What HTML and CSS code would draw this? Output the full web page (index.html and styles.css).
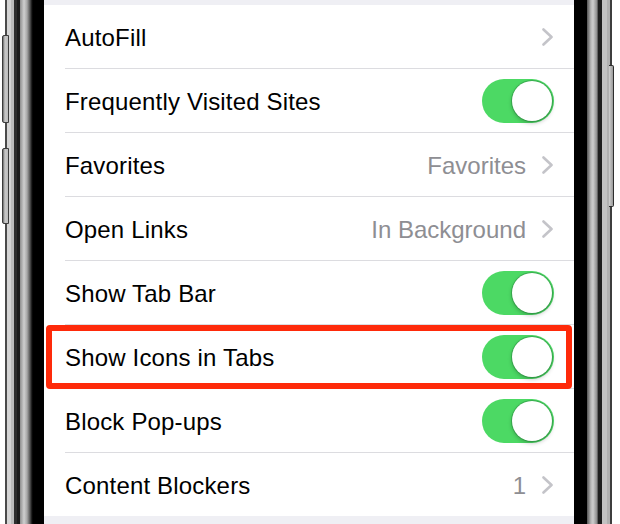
FILE: index.html
```html
<!DOCTYPE html>
<html lang="en">
<head>
<meta charset="utf-8">
<title>Safari Settings</title>
<link rel="stylesheet" href="styles.css">
</head>
<body>
<div class="phone">
  <div class="frame frame-left"></div>
  <div class="screen">
    <div class="group">
      <div class="row">
        <div class="row-inner">
          <span class="label">AutoFill</span>
          <span class="accessory">
            <svg class="chevron" viewBox="0 0 12 18" width="12" height="18"><polyline points="1.5,1.5 9.5,9 1.5,16.5"/></svg>
          </span>
        </div>
      </div>
      <div class="row">
        <div class="row-inner">
          <span class="label">Frequently Visited Sites</span>
          <span class="toggle"><span class="knob"></span></span>
        </div>
      </div>
      <div class="row">
        <div class="row-inner">
          <span class="label">Favorites</span>
          <span class="accessory">
            <span class="value">Favorites</span>
            <svg class="chevron" viewBox="0 0 12 18" width="12" height="18"><polyline points="1.5,1.5 9.5,9 1.5,16.5"/></svg>
          </span>
        </div>
      </div>
      <div class="row">
        <div class="row-inner">
          <span class="label">Open Links</span>
          <span class="accessory">
            <span class="value">In Background</span>
            <svg class="chevron" viewBox="0 0 12 18" width="12" height="18"><polyline points="1.5,1.5 9.5,9 1.5,16.5"/></svg>
          </span>
        </div>
      </div>
      <div class="row">
        <div class="row-inner">
          <span class="label">Show Tab Bar</span>
          <span class="toggle"><span class="knob"></span></span>
        </div>
      </div>
      <div class="row highlight">
        <div class="row-inner">
          <span class="label">Show Icons in Tabs</span>
          <span class="toggle"><span class="knob"></span></span>
        </div>
      </div>
      <div class="row">
        <div class="row-inner">
          <span class="label">Block Pop-ups</span>
          <span class="toggle"><span class="knob"></span></span>
        </div>
      </div>
      <div class="row last">
        <div class="row-inner">
          <span class="label">Content Blockers</span>
          <span class="accessory">
            <span class="value">1</span>
            <svg class="chevron" viewBox="0 0 12 18" width="12" height="18"><polyline points="1.5,1.5 9.5,9 1.5,16.5"/></svg>
          </span>
        </div>
      </div>
    </div>
  </div>
  <div class="frame frame-right"></div>
</div>
</body>
</html>
```

FILE: styles.css
```css
html, body {
  margin: 0;
  padding: 0;
  background: #ffffff;
}

.phone {
  display: flex;
  width: 620px;
  height: 524px;
  overflow: hidden;
  font-family: "Liberation Sans", Arial, sans-serif;
}

.frame {
  position: relative;
  height: 524px;
  flex: none;
}

.frame-left {
  width: 44px;
  background: linear-gradient(to right,
    #ffffff 0 5px,
    #4a4a4a 5px 7px,
    #d4d4d4 7px 11px,
    #bcbcbc 11px 14px,
    #2e2e2e 14px 17px,
    #1c1c1c 17px 20px,
    #8e8e8e 20px,
    #cfcfcf 24px,
    #a8a8a8 27px,
    #555555 30px,
    #111111 32px,
    #000000 33px 44px);
}

.frame-left::before,
.frame-left::after {
  content: "";
  position: absolute;
  left: 2px;
  width: 5px;
  background: linear-gradient(to right, #6a6a6a, #c8c8c8 40%, #bdbdbd);
  border: 1px solid #3c3c3c;
  border-radius: 2px 0 0 2px;
}

.frame-left::before {
  top: 35px;
  height: 86px;
}

.frame-left::after {
  top: 148px;
  height: 74px;
}

.frame-right {
  width: 46px;
  background: linear-gradient(to right,
    #000000 0 13px,
    #555555 13px,
    #b9b9b9 17px,
    #cdcdcd 19px,
    #8a8a8a 23px,
    #3a3a3a 24px,
    #1e1e1e 24px 28px,
    #c2c2c2 28px 33px,
    #b0b0b0 33px 36px,
    #3e3e3e 36px 38px,
    #ffffff 38px 46px);
}

.frame-right::after {
  content: "";
  position: absolute;
  top: 65px;
  left: 35px;
  width: 4px;
  height: 140px;
  background: linear-gradient(to right, #d0d0d0, #9a9a9a);
  border: 1px solid #2e2e2e;
  border-left: none;
  border-radius: 0 2px 2px 0;
}

.screen {
  width: 530px;
  height: 524px;
  flex: none;
  background: #efeff4;
  padding-top: 5px;
  box-sizing: border-box;
}

.group {
  background: #ffffff;
}

.row {
  position: relative;
  padding-left: 21px;
}

.row-inner {
  display: flex;
  align-items: center;
  justify-content: space-between;
  height: 64px;
  box-sizing: border-box;
  padding: 2px 20px 0 0;
  border-bottom: 1px solid #dcdce0;
}

.row.last .row-inner {
  height: 63px;
  border-bottom: none;
}

.label {
  font-size: 24px;
  color: #000000;
  letter-spacing: 0.17px;
}

.accessory {
  display: flex;
  align-items: center;
  gap: 16px;
}

.value {
  font-size: 24px;
  color: #8e8e93;
}

.chevron {
  display: block;
  margin-top: -1px;
}

.chevron polyline {
  fill: none;
  stroke: #c4c4c9;
  stroke-width: 2.6;
  stroke-linecap: round;
  stroke-linejoin: round;
}

.toggle {
  position: relative;
  width: 72px;
  height: 44px;
  margin-top: -2px;
  border-radius: 22px;
  background: #4cd964;
  flex: none;
}

.knob {
  position: absolute;
  top: 2px;
  right: 2px;
  width: 40px;
  height: 40px;
  border-radius: 50%;
  background: #ffffff;
  box-shadow: 0 0 0 1px rgba(30, 110, 50, 0.35), 0 2px 4px rgba(0, 0, 0, 0.25);
}

.highlight::after {
  content: "";
  position: absolute;
  top: 0;
  bottom: 0;
  left: 2px;
  right: 2px;
  border: 6px solid #fe2a0a;
  border-radius: 4px;
  pointer-events: none;
}
```
